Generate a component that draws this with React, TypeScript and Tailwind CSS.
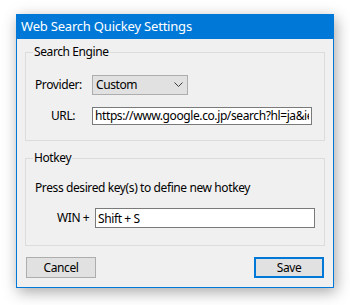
import React, { useState } from "react";

const font = { fontFamily: '"Noto Sans", "Noto Sans CJK JP", sans-serif' };

const App: React.FC = (): React.ReactElement => {
  const [provider, setProvider] = useState("Custom");
  const [url, setUrl] = useState("https://www.google.co.jp/search?hl=ja&ie=");
  const [hotkey] = useState("Shift + S");

  return (
    <div className="w-[350px] h-[305px] bg-white pt-[14px] pl-[16px] overflow-hidden tracking-[-0.4px]" style={font}>
      {/* window */}
      <div className="w-[318px] h-[274px] flex flex-col border border-[#0078d7] bg-[#f0f0f0] shadow-[2px_4px_14px_rgba(0,0,0,0.35)]">
        <div className="h-[25px] bg-[#0078d7] text-white text-[13px] tracking-[-0.2px] leading-[25px] pl-[4px] -mt-px">
          Web Search Quickey Settings
        </div>

        <div className="flex flex-col px-[8px] pt-[5px]">
          {/* Search Engine group */}
          <fieldset className="border border-[#dcdcdc] h-[97px] px-[9px]">
            <legend className="text-[12px] text-black px-[1px] ml-[-2px] leading-[16px]">Search Engine</legend>
            <div className="flex items-center mt-[15px]">
              <span className="w-[57px] text-[12px] text-black">Provider:</span>
              <div className="relative w-[96px] h-[20px] bg-[#e1e1e1] border border-[#adadad] flex items-center">
                <select
                  value={provider}
                  onChange={(e) => setProvider(e.target.value)}
                  className="appearance-none bg-transparent w-full h-full text-[12px] text-black pl-[3px] outline-none"
                >
                  <option>Custom</option>
                  <option>Google</option>
                  <option>Bing</option>
                </select>
                <svg className="absolute right-[4px] pointer-events-none" width="9" height="6" viewBox="0 0 9 6">
                  <path d="M0.5 0.5 L4.5 4.5 L8.5 0.5" fill="none" stroke="#3c3c3c" strokeWidth="1" />
                </svg>
              </div>
            </div>
            <div className="flex items-center mt-[12px]">
              <span className="w-[57px] text-[12px] text-black pl-[16px]">URL:</span>
              <input
                value={url}
                onChange={(e) => setUrl(e.target.value)}
                className="w-[220px] h-[18px] bg-white border border-[#7a7a7a] text-[12px] text-black px-[2px] outline-none"
              />
            </div>
          </fieldset>

          {/* Hotkey group */}
          <fieldset className="border border-[#dcdcdc] h-[96px] px-[9px] mt-[9px]">
            <legend className="text-[12px] text-black px-[1px] ml-[-2px] leading-[16px]">Hotkey</legend>
            <p className="text-[12px] text-black mt-[14px] leading-[16px]">Press desired key(s) to define new hotkey</p>
            <div className="flex items-center mt-[12px]">
              <span className="w-[60px] text-[12px] text-black pl-[22px] whitespace-nowrap">WIN&nbsp;+</span>
              <input
                value={hotkey}
                readOnly
                className="w-[220px] h-[20px] bg-white border border-[#7a7a7a] text-[12px] text-black px-[2px] outline-none"
              />
            </div>
          </fieldset>

          <div className="flex justify-between mt-[11px] pl-[1px] pr-[1px]">
            <button className="w-[70px] h-[21px] bg-[#e1e1e1] border border-[#adadad] text-[12px] text-black">
              Cancel
            </button>
            <button className="w-[70px] h-[21px] bg-[#e1e1e1] border-2 border-[#0078d7] text-[12px] text-black">
              Save
            </button>
          </div>
        </div>
      </div>
    </div>
  );
};

export default App;
